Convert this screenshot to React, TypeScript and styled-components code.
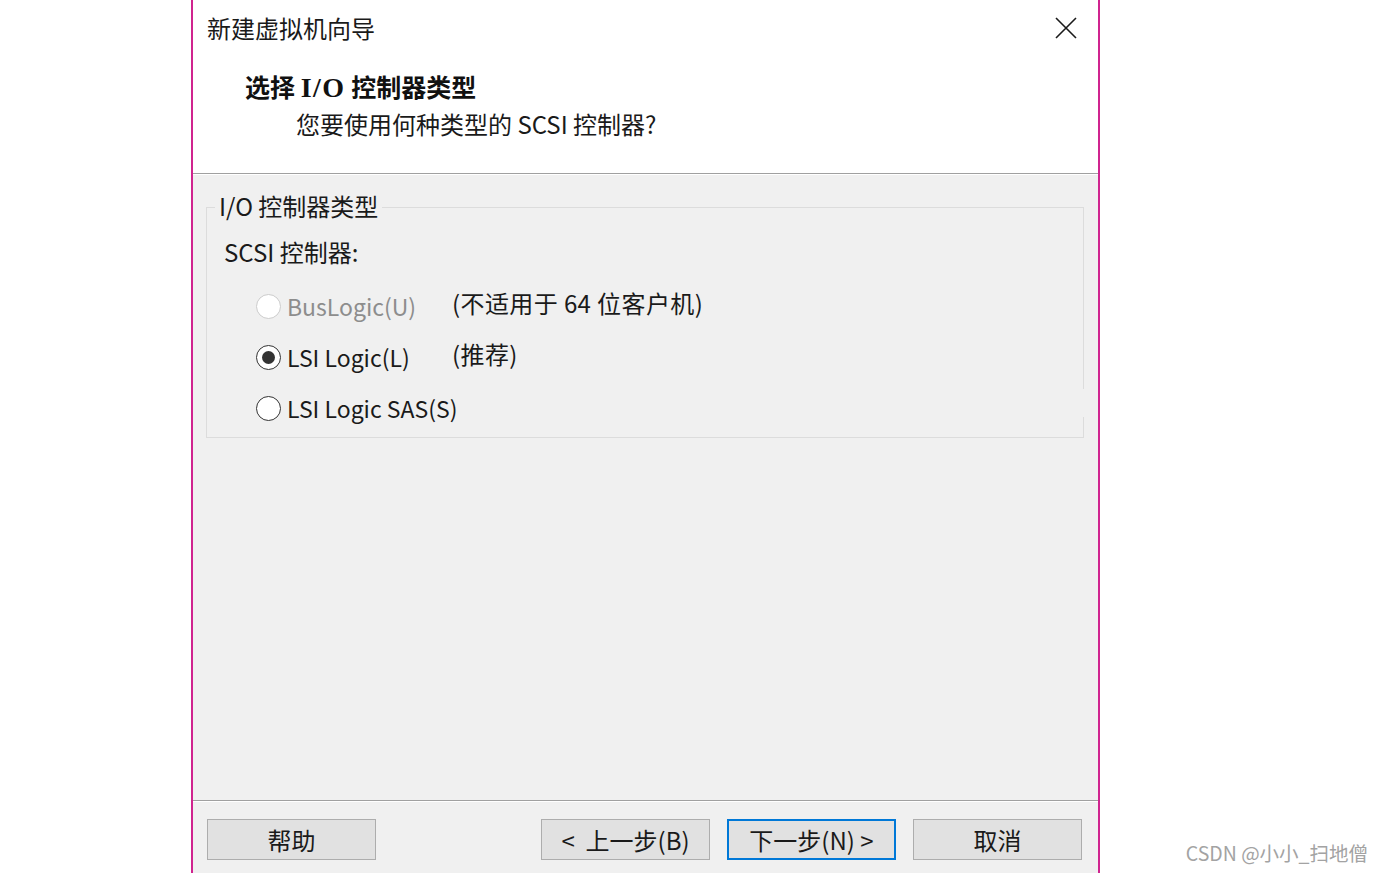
import React, { FC } from "react";
import styled, { createGlobalStyle, css } from "styled-components";

const GlobalStyle = createGlobalStyle`
    html, body {
        margin: 0;
        padding: 0;
        background: #ffffff;
    }
    body {
        font-family: "Noto Sans CJK SC", "Noto Sans", sans-serif;
        color: #000000;
    }
`;

const options = [
    { label: "BusLogic(U)", note: "(不适用于 64 位客户机)", disabled: true, checked: false },
    { label: "LSI Logic(L)", note: "(推荐)", disabled: false, checked: true },
    { label: "LSI Logic SAS(S)", note: "", disabled: false, checked: false },
];

const App: FC = () => {
    return (
        <Page>
            <GlobalStyle />
            <Dialog>
                <Header>
                    <TitleRow>
                        <WindowTitle>新建虚拟机向导</WindowTitle>
                        <CloseButton aria-label="close">
                            <svg width="22" height="22" viewBox="0 0 22 22">
                                <path d="M1 1 L21 21 M21 1 L1 21" stroke="#1a1a1a" strokeWidth="1.6" />
                            </svg>
                        </CloseButton>
                    </TitleRow>
                    <Heading>
                        选择 <Serif>I/O</Serif> 控制器类型
                    </Heading>
                    <SubHeading>您要使用何种类型的 SCSI 控制器?</SubHeading>
                </Header>
                <Separator />
                <Body>
                    <GroupBox>
                        <Legend>I/O 控制器类型</Legend>
                        <GroupLabel>SCSI 控制器:</GroupLabel>
                        <OptionList>
                            {options.map((o) => (
                                <OptionRow key={o.label}>
                                    <Radio disabled={o.disabled} checked={o.checked} />
                                    <OptionLabel disabled={o.disabled}>{o.label}</OptionLabel>
                                    {o.note && <OptionNote>{o.note}</OptionNote>}
                                </OptionRow>
                            ))}
                        </OptionList>
                        <BorderGap />
                    </GroupBox>
                </Body>
                <Separator />
                <Footer>
                    <Button>帮助</Button>
                    <Spacer />
                    <Button>&lt;&nbsp; 上一步(B)</Button>
                    <Button primary>下一步(N) &gt;</Button>
                    <Button>取消</Button>
                </Footer>
            </Dialog>
            <Watermark>CSDN @小小_扫地僧</Watermark>
        </Page>
    );
};

export default App;

const Page = styled.div`
    position: relative;
    display: flex;
    height: 873px;
    padding-left: 191px;
    overflow: hidden;
`;

const Dialog = styled.div`
    display: flex;
    flex-direction: column;
    width: 905px;
    height: 873px;
    border-left: 2px solid #d0248f;
    border-right: 2px solid #d0248f;
    background: #f0f0f0;
`;

const Header = styled.div`
    height: 173px;
    flex-shrink: 0;
    background: #ffffff;
    box-sizing: border-box;
    padding: 6px 0 0 14px;
`;

const TitleRow = styled.div`
    display: flex;
    align-items: center;
    justify-content: space-between;
    height: 44px;
`;

const WindowTitle = styled.span`
    font-size: 24px;
    line-height: 44px;
    color: #1a1a1a;
`;

const CloseButton = styled.div`
    display: flex;
    width: 22px;
    height: 22px;
    margin-right: 21px;
`;

const Heading = styled.div`
    margin: 17px 0 0 38px;
    font-size: 25px;
    line-height: 38px;
    font-weight: 700;
    color: #111111;
`;

const Serif = styled.span`
    font-family: "Liberation Serif", "Noto Sans CJK SC", serif;
    font-size: 28px;
    letter-spacing: 1.5px;
`;

const SubHeading = styled.div`
    margin: 0 0 0 89px;
    font-size: 24px;
    line-height: 34px;
    color: #1a1a1a;
`;

const Separator = styled.div`
    height: 1px;
    flex-shrink: 0;
    background: #a0a0a0;
    border-bottom: 1px solid #ffffff;
`;

const Body = styled.div`
    flex: 1;
    padding: 32px 14px 0 13px;
`;

const GroupBox = styled.div`
    position: relative;
    height: 231px;
    border: 1px solid #dcdcdc;
    box-sizing: border-box;
    padding: 25px 0 0 17px;
`;

const Legend = styled.span`
    position: absolute;
    left: 8px;
    top: -18px;
    padding: 0 4px;
    background: #f0f0f0;
    font-size: 24px;
    line-height: 32px;
    color: #1a1a1a;
`;

const BorderGap = styled.div`
    position: absolute;
    right: -1px;
    top: 181px;
    width: 1px;
    height: 28px;
    background: #f0f0f0;
`;

const GroupLabel = styled.div`
    font-size: 24px;
    line-height: 38px;
    color: #1a1a1a;
`;

const OptionList = styled.div`
    display: flex;
    flex-direction: column;
    gap: 13px;
    margin: 16px 0 0 32px;
`;

const OptionRow = styled.div`
    display: flex;
    align-items: center;
    height: 38px;
`;

interface RadioProps {
    checked?: boolean;
    disabled?: boolean;
}

const Radio = styled.span<RadioProps>`
    position: relative;
    width: 23px;
    height: 23px;
    border-radius: 50%;
    background: #ffffff;
    border: 1.5px solid #333333;
    flex-shrink: 0;

    ${(p) => p.disabled && css`
        border-color: #cccccc;
    `}

    ${(p) => p.checked && css`
        &::after {
            content: "";
            position: absolute;
            left: 5px;
            top: 5px;
            width: 13px;
            height: 13px;
            border-radius: 50%;
            background: #333333;
        }
    `}
`;

const OptionLabel = styled.span<{ disabled?: boolean }>`
    min-width: 165px;
    margin-left: 6px;
    white-space: nowrap;
    font-size: 23px;
    line-height: 38px;
    color: ${(p) => (p.disabled ? "#8d8d8d" : "#1a1a1a")};
`;

const OptionNote = styled.span`
    font-size: 24px;
    line-height: 38px;
    color: #1a1a1a;
    margin-top: -6px;
    white-space: nowrap;
    letter-spacing: 0.4px;
`;

const Footer = styled.div`
    display: flex;
    align-items: flex-start;
    gap: 17px;
    height: 71px;
    flex-shrink: 0;
    box-sizing: border-box;
    padding: 17px 16px 0 14px;
`;

const Spacer = styled.div`
    flex: 1;
`;

const Button = styled.button<{ primary?: boolean }>`
    width: 169px;
    height: 41px;
    box-sizing: border-box;
    background: #e1e1e1;
    border: 1px solid #adadad;
    border-radius: 0;
    font-family: inherit;
    font-size: 24px;
    line-height: 1;
    color: #1a1a1a;
    padding: 0;

    ${(p) => p.primary && css`
        border: 2px solid #0078d7;
    `}
`;

const Watermark = styled.div`
    position: absolute;
    right: 14px;
    bottom: 6px;
    font-size: 19.5px;
    color: #a3a3a3;
    font-family: "Noto Sans CJK SC", "Noto Sans", sans-serif;
`;
